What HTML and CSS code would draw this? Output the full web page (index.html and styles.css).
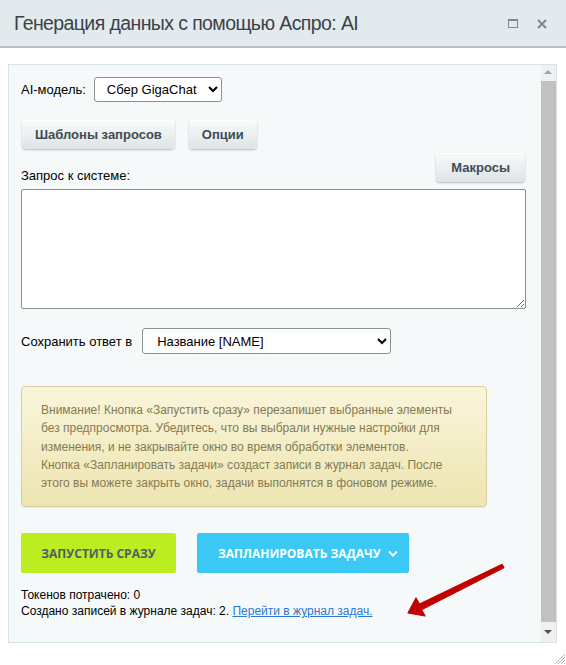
FILE: index.html
```html
<!DOCTYPE html>
<html lang="ru">
<head>
  <meta charset="UTF-8" />
  <title>Генерация данных с помощью Аспро: AI</title>
  <link rel="stylesheet" href="styles.css">
</head>
<body>
  <div class="dialog">
    <div class="dialog-head">
      <span class="dialog-title">Генерация данных с помощью Аспро: AI</span>
      <div class="head-icons">
        <span class="icon-max"></span>
        <svg class="icon-close" width="10" height="10" viewBox="0 0 10 10">
          <path d="M1 1 L9 9 M9 1 L1 9" stroke="#7b889a" stroke-width="2" />
        </svg>
      </div>
    </div>

    <div class="panel">
      <div class="panel-content">
        <div class="row">
          <label for="model">AI-модель:</label>
          <select id="model" class="select-model">
            <option>Сбер GigaChat</option>
          </select>
        </div>

        <div class="row row-btns">
          <button class="btn">Шаблоны запросов</button>
          <button class="btn">Опции</button>
        </div>

        <div class="row row-query">
          <label for="query">Запрос к системе:</label>
          <button class="btn">Макросы</button>
        </div>

        <textarea id="query" class="query"></textarea>

        <div class="row row-save">
          <label for="field">Сохранить ответ в</label>
          <select id="field" class="select-field">
            <option>Название [NAME]</option>
          </select>
        </div>

        <div class="notice">
          Внимание! Кнопка «Запустить сразу» перезапишет выбранные элементы
          без предпросмотра. Убедитесь, что вы выбрали нужные настройки для
          изменения, и не закрывайте окно во время обработки элементов.<br>
          Кнопка «Запланировать задачи» создаст записи в журнал задач. После
          этого вы можете закрыть окно, задачи выполнятся в фоновом режиме.
        </div>

        <div class="row row-actions">
          <button class="act act-run">Запустить сразу</button>
          <button class="act act-plan">Запланировать задачу
            <svg width="10" height="7" viewBox="0 0 10 7"><path d="M1 1.5 L5 5.5 L9 1.5" fill="none" stroke="#fff" stroke-width="2" /></svg>
          </button>
        </div>

        <div class="stats">
          Токенов потрачено: 0<br>
          Создано записей в журнале задач: 2. <a href="#">Перейти в журнал задач.</a>
        </div>
      </div>

      <div class="scrollbar">
        <span class="sb-up"></span>
        <span class="sb-thumb"></span>
        <span class="sb-down"></span>
      </div>
    </div>

    <!-- стрелка-указатель на ссылку -->
    <svg class="arrow" width="110" height="65" viewBox="0 0 110 65">
      <polygon points="8,58 16,43 19.5,49 102.2,9.4 103.8,12.6 21.5,54.6 25,61" fill="#c10000" stroke="#c10000" stroke-width="1.2" stroke-linejoin="round" />
    </svg>

    <svg class="grip" width="13" height="13" viewBox="0 0 13 13">
      <path d="M12 2 L2 12 M12 5 L5 12 M12 8 L8 12 M12 11 L11 12" stroke="#b5b5b5" stroke-width="1" />
    </svg>
  </div>
</body>
</html>
```

FILE: styles.css
```css
* {
  box-sizing: border-box;
}
body {
  margin: 0;
  background: #fff;
  font-family: "Liberation Sans", Arial, sans-serif;
  font-size: 13px;
  color: #000;
}
.dialog {
  position: relative;
  width: 566px;
  height: 665px;
  overflow: hidden;
}
.dialog-head {
  height: 48px;
  background: #e2eaed;
  border-bottom: 2px solid #b7c0c4;
  display: flex;
  align-items: center;
  justify-content: space-between;
  padding: 0 19px 0 14px;
}
.dialog-title {
  font-size: 19.5px;
  letter-spacing: -0.6px;
  color: #3c4249;
  margin-top: 1px;
}
.head-icons {
  display: flex;
  align-items: center;
  gap: 19px;
  margin-top: 1px;
}
.icon-max {
  width: 10px;
  height: 9px;
  border: 1px solid #7b889a;
  border-top-width: 2px;
}
.panel {
  display: flex;
  margin: 16px 9px 0 8px;
  height: 579px;
  background: #f5f9f9;
  border: 1px solid #d6e3e9;
}
.panel-content {
  flex: 1;
  padding: 12px 15px 0 12px;
}
.row {
  display: flex;
  align-items: center;
}
label {
  color: #000;
}
select {
  font-family: "Liberation Sans", Arial, sans-serif;
  font-size: 13px;
  color: #000;
  background: #fff;
  border: 1px solid #8f8f8f;
  border-radius: 3px;
  padding: 0 4px 0 8px;
}
.select-model {
  margin-left: 8px;
  width: 128px;
  height: 25px;
}
.row-btns {
  margin-top: 18px;
  gap: 14px;
  padding-left: 1px;
}
.btn {
  height: 29px;
  padding: 0 13px;
  border: none;
  border-radius: 4px;
  background: linear-gradient(#f9fbfb, #dde4e6);
  box-shadow: 0 1px 2px rgba(0,0,0,0.25), inset 0 1px 0 #fff;
  font-family: "Liberation Sans", Arial, sans-serif;
  font-size: 13px;
  font-weight: bold;
  color: #3f4b56;
}
.row-query {
  margin-top: 4px;
  justify-content: space-between;
  align-items: flex-end;
}
.row-query label {
  margin-bottom: -1px;
}
.row-query .btn {
  margin-right: 1px;
  padding: 0 15px;
}
.query {
  display: block;
  width: 100%;
  height: 120px;
  margin-top: 7px;
  background: #fff;
  border: 1px solid #8f8f8f;
  border-radius: 2px;
}
.row-save {
  margin-top: 19px;
}
.select-field {
  margin-left: 10px;
  width: 249px;
  height: 26px;
  padding-left: 10px;
}
.notice {
  width: 466px;
  margin-top: 32px;
  padding: 14px 20px 14px 19px;
  border: 1px solid #d9cf9d;
  border-radius: 4px;
  background: linear-gradient(#f9f5da, #eee5b2);
  box-shadow: 0 1px 1px rgba(0,0,0,0.06);
  color: #857a52;
  font-size: 12px;
  line-height: 18.3px;
}
.row-actions {
  margin-top: 26px;
  gap: 21px;
}
.act {
  height: 40px;
  border: none;
  border-radius: 2px;
  font-family: "Open Sans", sans-serif;
  font-size: 12px;
  font-weight: bold;
  text-transform: uppercase;
  white-space: nowrap;
  display: flex;
  align-items: center;
}
.act-run {
  width: 155px;
  justify-content: center;
  background: #bbed21;
  color: #535c69;
}
.act-plan {
  width: 212px;
  padding: 0 10px 0 21px;
  gap: 7px;
  background: #3bc8f5;
  color: #fff;
}
.stats {
  margin-top: 14px;
  line-height: 16px;
  font-size: 12px;
}
.stats a {
  color: #2a7ad6;
}
.scrollbar {
  width: 15px;
  display: flex;
  flex-direction: column;
  background: #f0f0f0;
}
.sb-up,
.sb-down {
  height: 16px;
  position: relative;
}
.sb-up::after,
.sb-down::after {
  content: "";
  position: absolute;
  left: 3px;
  border-left: 4px solid transparent;
  border-right: 4px solid transparent;
}
.sb-up::after {
  top: 5px;
  border-bottom: 4px solid #a3a3a3;
}
.sb-down {
  height: 20px;
}
.sb-down::after {
  top: 8px;
  border-top: 4px solid #505050;
}
.sb-thumb {
  flex: 1;
  background: #c1c1c1;
}
.arrow {
  position: absolute;
  left: 400px;
  top: 555px;
}
.grip {
  position: absolute;
  right: 0;
  bottom: 0;
}
```
